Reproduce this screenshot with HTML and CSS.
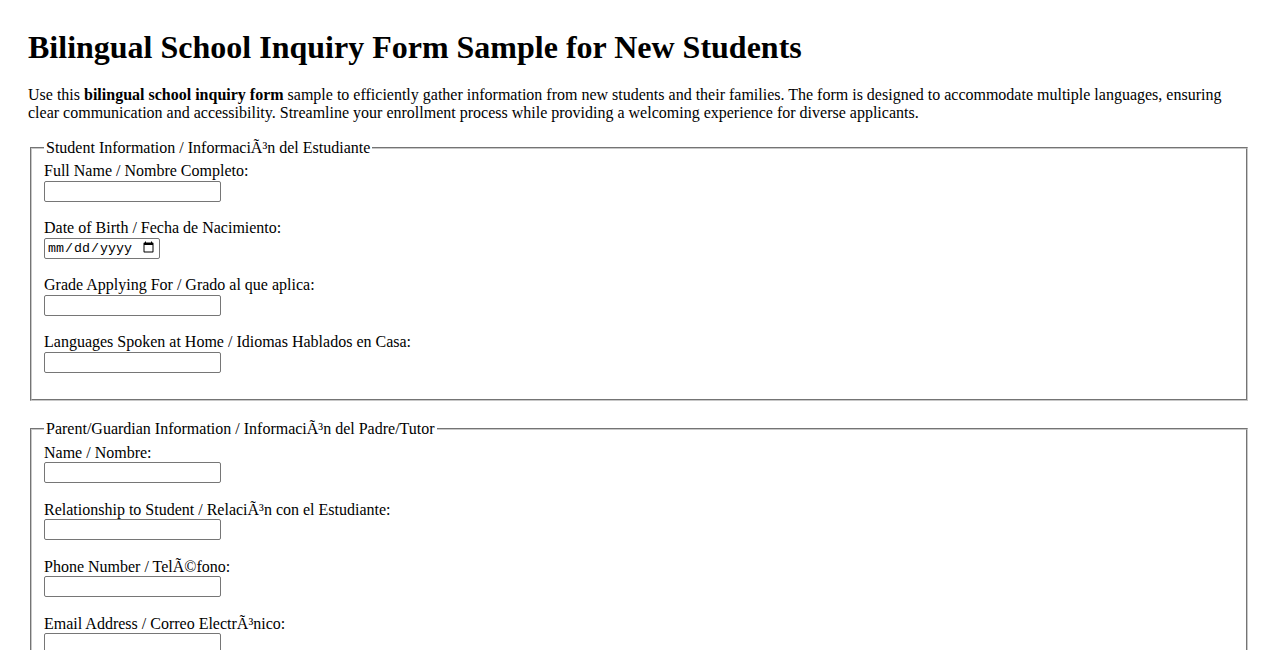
FILE: index.html
```html
<!DOCTYPE html>
<html lang="en">
<head>
<meta charset="utf-8">
<title>Bilingual School Inquiry Form Sample for New Students</title>
<link rel="stylesheet" href="styles.css">
</head>
<body>
<div class="page">
  <h1 class="title">Bilingual School Inquiry Form Sample for New Students</h1>
  <p class="intro">Use this <strong>bilingual school inquiry form</strong> sample to efficiently gather information from new students and their families. The form is designed to accommodate multiple languages, ensuring clear communication and accessibility. Streamline your enrollment process while providing a welcoming experience for diverse applicants.</p>
  <form class="form">
    <fieldset class="group">
      <legend class="group-title">Student Information / InformaciÃ³n del Estudiante</legend>
      <div class="field">
        <label class="field-label" for="fullname">Full Name / Nombre Completo:</label>
        <input class="field-input" type="text" id="fullname">
      </div>
      <div class="field">
        <label class="field-label" for="dob">Date of Birth / Fecha de Nacimiento:</label>
        <input class="field-input field-date" type="date" id="dob">
      </div>
      <div class="field">
        <label class="field-label" for="grade">Grade Applying For / Grado al que aplica:</label>
        <input class="field-input" type="text" id="grade">
      </div>
      <div class="field">
        <label class="field-label" for="langs">Languages Spoken at Home / Idiomas Hablados en Casa:</label>
        <input class="field-input" type="text" id="langs">
      </div>
    </fieldset>
    <fieldset class="group">
      <legend class="group-title">Parent/Guardian Information / InformaciÃ³n del Padre/Tutor</legend>
      <div class="field">
        <label class="field-label" for="pname">Name / Nombre:</label>
        <input class="field-input" type="text" id="pname">
      </div>
      <div class="field">
        <label class="field-label" for="rel">Relationship to Student / RelaciÃ³n con el Estudiante:</label>
        <input class="field-input" type="text" id="rel">
      </div>
      <div class="field">
        <label class="field-label" for="phone">Phone Number / TelÃ©fono:</label>
        <input class="field-input" type="tel" id="phone">
      </div>
      <div class="field">
        <label class="field-label" for="email">Email Address / Correo ElectrÃ³nico:</label>
        <input class="field-input" type="email" id="email">
      </div>
    </fieldset>
  </form>
</div>
</body>
</html>
```

FILE: styles.css
```css
html, body {
  margin: 0;
  padding: 0;
  background: #ffffff;
}

body {
  font-family: "Liberation Serif", "Times New Roman", serif;
  font-size: 16px;
  color: #000000;
}

.page {
  padding: 28px 28px;
}

.title {
  font-size: 32px;
  font-weight: bold;
  line-height: 37px;
  margin: 1px 0 20px 0;
}

.intro {
  margin: 0 0 16px 0;
  line-height: 18.4px;
}

.form {
  margin: 0;
}

.group {
  margin: 0 2px 19px 2px;
  padding: 5px 12px 9px 12px;
  border: 2px groove #c8c8c8;
}

.group-title {
  padding: 0 2px;
  line-height: 18.4px;
}

.field {
  display: flex;
  flex-direction: column;
  align-items: flex-start;
  margin-bottom: 17.6px;
}

.field-label {
  line-height: 18.4px;
}

.field-input {
  box-sizing: border-box;
  width: 177px;
  height: 21px;
  margin: 0;
  padding: 1px 2px;
  border: 1px solid #767676;
  border-radius: 2px;
  font-family: "Liberation Sans", Arial, sans-serif;
  font-size: 13.33px;
  background: #ffffff;
}

.field-date {
  width: 116px;
  font-family: "Liberation Mono", "DejaVu Sans Mono", monospace;
  font-size: 13.33px;
}
```
